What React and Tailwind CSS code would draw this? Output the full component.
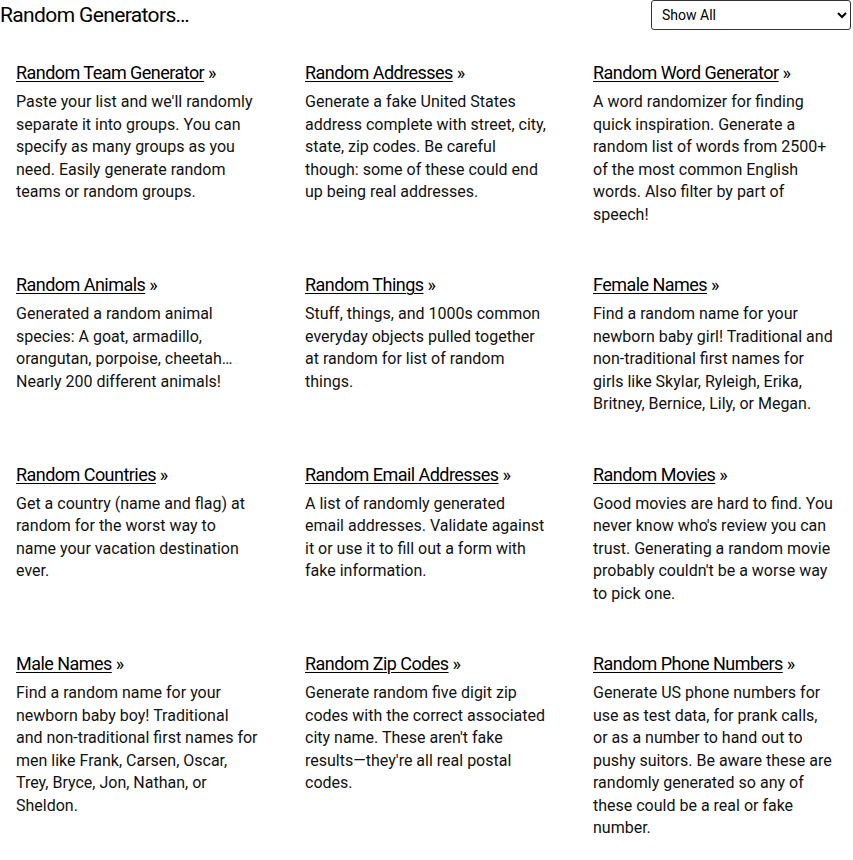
// Random generators index page

const items = [
  {
    title: 'Random Team Generator',
    text: "Paste your list and we'll randomly separate it into groups. You can specify as many groups as you need. Easily generate random teams or random groups.",
  },
  {
    title: 'Random Addresses',
    text: 'Generate a fake United States address complete with street, city, state, zip codes. Be careful though: some of these could end up being real addresses.',
  },
  {
    title: 'Random Word Generator',
    text: 'A word randomizer for finding quick inspiration. Generate a random list of words from 2500+ of the most common English words. Also filter by part of speech!',
  },
  {
    title: 'Random Animals',
    text: 'Generated a random animal species: A goat, armadillo, orangutan, porpoise, cheetah… Nearly 200 different animals!',
  },
  {
    title: 'Random Things',
    text: 'Stuff, things, and 1000s common everyday objects pulled together at random for list of random things.',
  },
  {
    title: 'Female Names',
    text: 'Find a random name for your newborn baby girl! Traditional and non-traditional first names for girls like Skylar, Ryleigh, Erika, Britney, Bernice, Lily, or Megan.',
  },
  {
    title: 'Random Countries',
    text: 'Get a country (name and flag) at random for the worst way to name your vacation destination ever.',
  },
  {
    title: 'Random Email Addresses',
    text: 'A list of randomly generated email addresses. Validate against it or use it to fill out a form with fake information.',
  },
  {
    title: 'Random Movies',
    text: "Good movies are hard to find. You never know who's review you can trust. Generating a random movie probably couldn't be a worse way to pick one.",
  },
  {
    title: 'Male Names',
    text: 'Find a random name for your newborn baby boy! Traditional and non-traditional first names for men like Frank, Carsen, Oscar, Trey, Bryce, Jon, Nathan, or Sheldon.',
  },
  {
    title: 'Random Zip Codes',
    text: "Generate random five digit zip codes with the correct associated city name. These aren't fake results—they're all real postal codes.",
  },
  {
    title: 'Random Phone Numbers',
    text: 'Generate US phone numbers for use as test data, for prank calls, or as a number to hand out to pushy suitors. Be aware these are randomly generated so any of these could be a real or fake number.',
  },
];

function GeneratorCard({ title, text }) {
  return (
    <div className="w-[242px]">
      <div className="text-[18px] leading-[28px] tracking-[-0.03em] text-black">
        <a href="#" className="underline underline-offset-2 decoration-1">
          {title}
        </a>{' '}
        »
      </div>
      <p className="mt-[4px] text-[16px] leading-[22.5px] text-[#111]">{text}</p>
    </div>
  );
}

export default function App() {
  return (
    <div className="w-[853px] bg-white font-['Roboto',sans-serif] text-black">
      <div className="flex items-start justify-between">
        <h1 className="pt-[1px] text-[21px] leading-[28px] tracking-[-0.03em]">Random Generators…</h1>
        <select className="mr-[2px] h-[30px] w-[200px] rounded-[3px] border border-[#333] bg-white px-[6px] text-[14px]">
          <option>Show All</option>
        </select>
      </div>
      <div className="mt-[29px] grid grid-cols-[289px_288px_1fr] gap-y-[45px] pl-[16px]">
        {items.map((item) => (
          <GeneratorCard key={item.title} {...item} />
        ))}
      </div>
    </div>
  );
}
